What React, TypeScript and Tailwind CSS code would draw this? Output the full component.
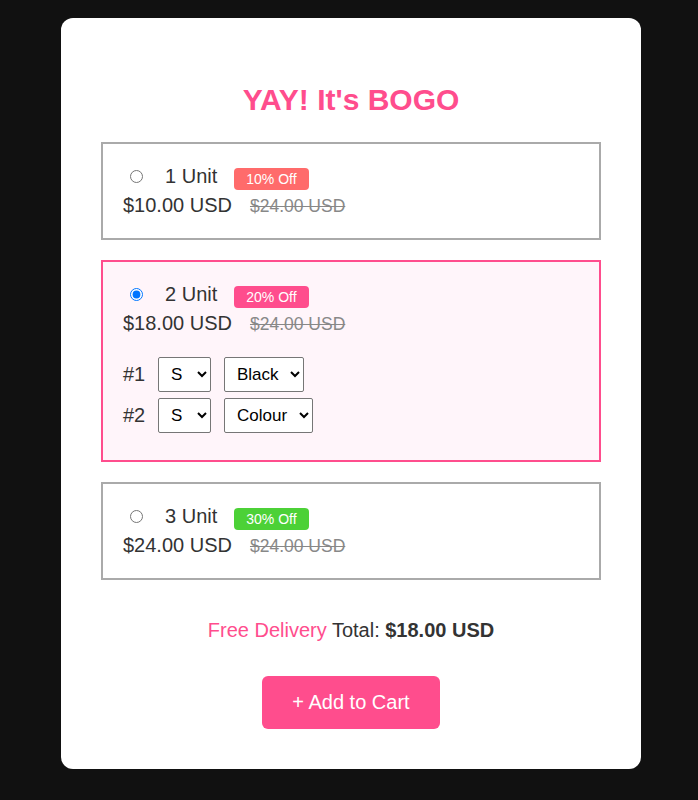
import React from 'react';

type Option = {
  units: number;
  price: string;
  badge: string;
  badgeColor: string;
  selected?: boolean;
};

const options: Option[] = [
  { units: 1, price: '$10.00 USD', badge: '10% Off', badgeColor: 'bg-[#ff6b6b]' },
  { units: 2, price: '$18.00 USD', badge: '20% Off', badgeColor: 'bg-[#ff4d8d]', selected: true },
  { units: 3, price: '$24.00 USD', badge: '30% Off', badgeColor: 'bg-[#4cd137]' },
];

const VariantRow = ({ label, colour }: { label: string; colour: string }) => (
  <div className="flex items-center h-[35px]">
    <span className="text-[20px] leading-[23px] w-[35px]">{label}</span>
    <select
      className="w-[53px] h-[35px] border border-[#767676] rounded-[2px] bg-white text-black text-[17px] leading-[20px] pl-[8px]"
      defaultValue="S"
    >
      <option>S</option>
      <option>M</option>
      <option>L</option>
    </select>
    <select
      className={`ml-[13px] h-[35px] border border-[#767676] rounded-[2px] bg-white text-black text-[17px] leading-[20px] pl-[8px] ${
        colour === 'Black' ? 'w-[80px]' : 'w-[89px]'
      }`}
      defaultValue={colour}
    >
      <option>Colour</option>
      <option>Black</option>
      <option>White</option>
    </select>
  </div>
);

const OptionBox = ({ option }: { option: Option }) => (
  <div
    className={`border-2 pt-[21px] pb-[21px] px-[20px] ${
      option.selected ? 'border-[#ff4d8d] bg-[#fff5fa]' : 'border-[#aaaaaa] bg-white'
    }`}
  >
    <div className="flex items-center h-[23px]">
      <input
        type="radio"
        name="bogo"
        checked={!!option.selected}
        readOnly
        className="m-0 ml-[7px] mr-[22px] w-[13px] h-[13px]"
      />
      <span className="text-[20px] leading-[23px]">{option.units} Unit</span>
      <span
        className={`ml-[17px] translate-y-[2px] ${option.badgeColor} text-white text-[14px] leading-[16px] py-[3px] px-[12px] rounded-[4px]`}
      >
        {option.badge}
      </span>
    </div>
    <div className="flex items-baseline h-[23px] mt-[6px]">
      <span className="text-[20px] leading-[23px]">{option.price}</span>
      <span className="ml-[18px] text-[17.5px] leading-[20px] text-[#888888] line-through">$24.00 USD</span>
    </div>
    {option.selected && (
      <div className="mt-[22px] mb-[6px] flex flex-col gap-[6px]">
        <VariantRow label="#1" colour="Black" />
        <VariantRow label="#2" colour="Colour" />
      </div>
    )}
  </div>
);

export default function App() {
  return (
    <div
      className="min-h-screen bg-[#111111] pt-[18px] pb-[31px]"
      style={{ fontFamily: '"Liberation Sans", Arial, sans-serif' }}
    >
      <div className="w-[580px] ml-[61px] bg-white rounded-[12px] p-[40px] text-[#333333]">
        <h1 className="text-center text-[30px] leading-[35px] font-bold text-[#ff4d8d] mt-[24px] mb-[25px]">
          YAY! It's BOGO
        </h1>

        <div className="flex flex-col gap-[20px]">
          {options.map((option) => (
            <OptionBox key={option.units} option={option} />
          ))}
        </div>

        <p className="text-center text-[20px] leading-[23px] mt-[39px]">
          <span className="text-[#ff4d8d]">Free Delivery</span> Total:{' '}
          <span className="font-bold">$18.00 USD</span>
        </p>

        <div className="flex justify-center mt-[34px]">
          <button className="bg-[#ff4d8d] text-white text-[20px] leading-[23px] px-[30px] py-[15px] rounded-[6px]">
            + Add to Cart
          </button>
        </div>
      </div>
    </div>
  );
}
